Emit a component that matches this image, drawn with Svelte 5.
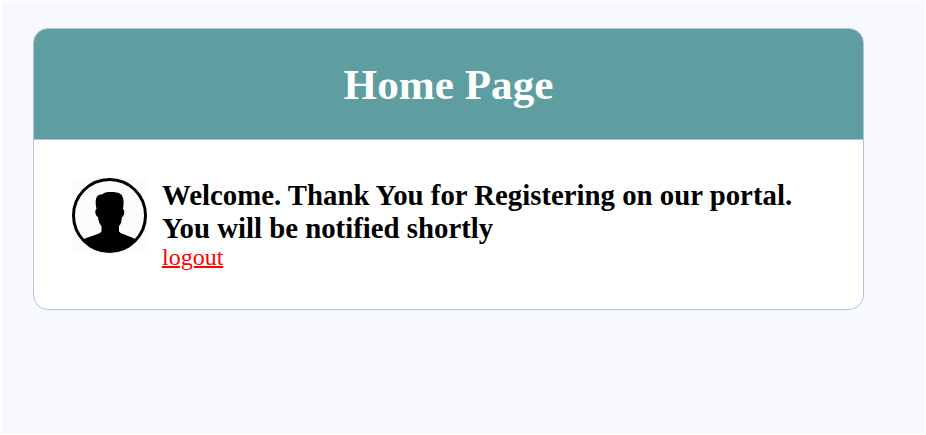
<script>
  const title = 'Home Page';
</script>

<main>
  <section class="card">
    <header><h2>{title}</h2></header>
    <div class="content">
      <svg class="avatar" viewBox="0 0 75 75" role="img" aria-label="User profile">
        <defs>
          <clipPath id="avatar-clip"><circle cx="37.5" cy="37.5" r="36.5" /></clipPath>
        </defs>
        <rect width="75" height="75" fill="#fcfcfc" />
        <path
          clip-path="url(#avatar-clip)"
          d="M24.5 31C23.300 26 23 20 26 17.500C28 16.200 30 17 31.500 15.500C34.500 13.500 45 13.500 48.500 16C52.500 19 51.800 26 51 31C53 32 52.500 38 50 39C49.500 43.500 49 46 47 48V53.500C50 57 59 57.500 65 62.500V75H10V62.500C17 57.500 27 57 29.500 53.500V48C27.500 46 26.500 43.500 26 39C23 38 22.500 32 24.500 31Z"
        />
        <circle cx="37.5" cy="37.5" r="36" fill="none" stroke="#000" stroke-width="3" />
      </svg>
      <div class="message">
        <strong>Welcome. Thank You for Registering on our portal. You will be notified shortly</strong>
        <a href="#logout">logout</a>
      </div>
    </div>
  </section>
</main>

<style>
  :global(body) {
    background: #fff;
  }
  main {
    box-sizing: border-box;
    height: 435px;
    padding: 27px 61px 0 32px;
    border: 1px solid #fff;
    background: #f8f8ff;
    font-family: 'Liberation Serif', 'Times New Roman', serif;
  }
  .card {
    box-sizing: border-box;
    width: 831px;
    height: 282px;
    border: 1px solid #b0c4de;
    border-radius: 15px;
    background: #fff;
    overflow: hidden;
  }
  header {
    box-sizing: border-box;
    height: 111px;
    padding-top: 2px;
    display: flex;
    align-items: center;
    justify-content: center;
    background: #5f9ea0;
    border-bottom: 1px solid #b0c4de;
    color: #fff;
  }
  h2 {
    margin: 0;
    font-size: 43.2px;
    line-height: 50px;
  }
  .content {
    display: flex;
    align-items: flex-start;
    gap: 15px;
    padding: 38px;
  }
  .avatar {
    flex: none;
    width: 75px;
    height: 75px;
  }
  .message {
    flex: 1;
  }
  strong {
    display: block;
    padding-top: 1px;
    font-size: 28.8px;
    line-height: 33px;
  }
  a {
    display: block;
    width: fit-content;
    color: red;
    font-size: 24px;
    line-height: 25px;
    text-decoration-thickness: 2px;
  }
</style>
